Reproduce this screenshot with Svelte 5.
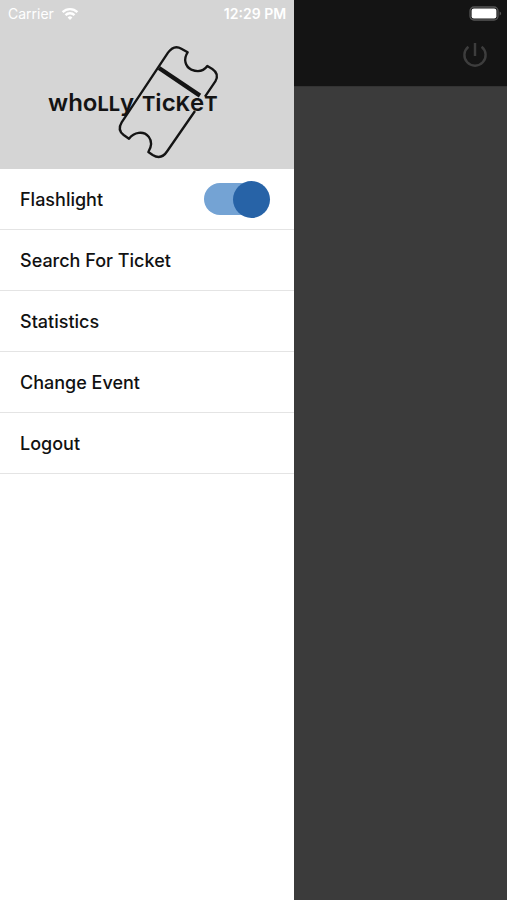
<script>
  let flashlight = $state(true);
  const items = ['Search For Ticket', 'Statistics', 'Change Event', 'Logout'];
</script>

<div class="screen">
  <div class="status">
    <div class="carrier">
      <span>Carrier</span>
      <svg width="18" height="14" viewBox="0 0 18 14" fill="none" stroke="#fff" stroke-width="2.4" aria-hidden="true">
        <path d="M1.6 5.1a10.6 10.6 0 0 1 14.8 0" />
        <path d="M4.5 8.1a6.4 6.4 0 0 1 9 0" />
        <path d="M9 13 6.6 10.5a3.5 3.5 0 0 1 4.8 0z" fill="#fff" stroke="none" />
      </svg>
    </div>
    <span class="time">12:29 PM</span>
    <svg class="battery" width="33" height="15" viewBox="0 0 33 15" aria-hidden="true">
      <rect x="1" y="1" width="28" height="13" rx="4" fill="none" stroke="#555" stroke-width="1.3" />
      <rect x="2.6" y="2.6" width="24.8" height="9.8" rx="2.2" fill="#fff" />
      <path d="M30.6 5.5c2 .8 2 3.2 0 4z" fill="#555" />
    </svg>
  </div>

  <aside class="drawer">
    <header class="brand">
      <svg width="190" height="134" viewBox="0 0 190 134" role="img" aria-label="Wholly Ticket">
        <g transform="scale(.33333)" fill="none" stroke="#141414" stroke-width="7" stroke-linejoin="round">
          <path d="M465 228 382 348Q364 376 338 360L325 351Q341 325 326 305C310 286 282 292 267 311L251 300Q231 285 245 262L384 53Q402 28 424 41L443 52C429 72 436 95 454 104C473 112 491 108 502 93L517 102Q539 117 526 139L495 185" />
          <path d="M357 99 480 182" stroke-width="13" />
        </g>
        <text x="8" y="76">who<tspan class="cap">LL</tspan>y</text>
        <text x="102" y="76"><tspan class="cap">T</tspan>ic<tspan class="cap">K</tspan>e<tspan class="cap">T</tspan></text>
      </svg>
    </header>
    <nav>
      <label class="row">
        <span>Flashlight</span>
        <input type="checkbox" role="switch" bind:checked={flashlight} />
      </label>
      {#each items as item}
        <button class="row" type="button">{item}</button>
      {/each}
    </nav>
  </aside>

  <main class="page">
    <div class="toolbar">
      <button class="power" type="button" aria-label="Power">
        <svg width="26" height="26" viewBox="0 0 26 26" fill="none" stroke="#3d3d3d" stroke-width="2.4">
          <path d="M6.4 4.8a10.6 10.6 0 1 0 13.2 0" />
          <path d="M13 1v13" />
        </svg>
      </button>
    </div>
  </main>
</div>

<style>
  :global(body) {
    margin: 0;
    background: #3b3b3b;
  }
  .screen {
    position: relative;
    display: flex;
    min-height: 100vh;
    font-family: Inter, "Liberation Sans", sans-serif;
  }
  .status {
    position: absolute;
    top: 0;
    left: 0;
    right: 0;
    display: grid;
    grid-template-columns: 1fr auto 1fr;
    align-items: center;
    height: 27px;
    padding: 0 5px 0 8px;
    color: #fff;
    font-size: 14px;
  }
  .carrier {
    display: flex;
    align-items: center;
    gap: 7px;
  }
  .time {
    font-weight: 600;
  }
  .battery {
    justify-self: end;
  }
  .drawer {
    width: 58%;
    background: #fff;
  }
  .brand {
    display: flex;
    justify-content: center;
    align-items: flex-end;
    box-sizing: border-box;
    height: 169px;
    padding-right: 24px;
    background: #d5d5d5;
  }
  .brand text {
    fill: #141414;
    font-size: 24px;
    font-weight: 600;
  }
  .brand .cap {
    font-size: 20px;
    font-weight: 700;
  }
  .row {
    display: flex;
    align-items: center;
    justify-content: space-between;
    box-sizing: border-box;
    width: 100%;
    height: 61px;
    padding: 0 24px 0 20px;
    border: 0;
    border-bottom: 1px solid #e4e4e4;
    background: none;
    color: #111;
    font: 500 18px Inter, "Liberation Sans", sans-serif;
    text-align: left;
  }
  input {
    appearance: none;
    display: grid;
    align-items: center;
    width: 66px;
    height: 37px;
    margin: 0;
  }
  input::before,
  input::after {
    content: "";
    grid-area: 1 / 1;
    border-radius: 20px;
  }
  input::before {
    width: 62px;
    height: 32px;
    background: #c4c4c4;
  }
  input::after {
    width: 37px;
    height: 37px;
    background: #eee;
  }
  input:checked::before {
    background: #74a3d4;
  }
  input:checked::after {
    justify-self: end;
    background: #2763a7;
  }
  .page {
    flex: 1;
    background: #3b3b3b;
  }
  .toolbar {
    display: flex;
    justify-content: flex-end;
    align-items: flex-end;
    box-sizing: border-box;
    height: 87px;
    padding: 0 19px 18px 0;
    border-bottom: 1px solid #333;
    background: #141414;
  }
  .power {
    display: flex;
    padding: 0;
    border: 0;
    background: none;
  }
</style>
